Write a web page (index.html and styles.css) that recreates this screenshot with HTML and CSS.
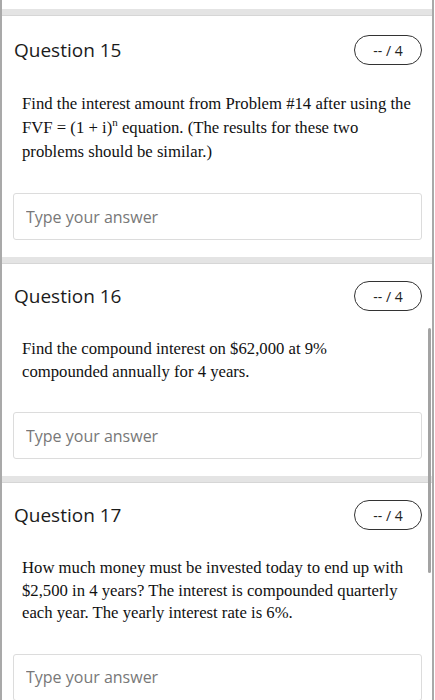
FILE: index.html
```html
<!DOCTYPE html>
<html lang="en">
<head>
    <meta charset="UTF-8">
    <meta name="viewport" content="width=device-width, initial-scale=1.0">
    <title>Quiz</title>
    <link rel="stylesheet" href="styles.css">
</head>
<body>
    <div class="quiz">
        <!-- end of the previous question -->
        <div class="prev-end"></div>

        <div class="question">
            <div class="question-head">
                <h2>Question 15</h2>
                <span class="score">-- / 4</span>
            </div>
            <p class="prompt prompt-formula">Find the interest amount from Problem #14 after using the FVF = (1 + i)<sup>n</sup> equation. (The results for these two problems should be similar.)</p>
            <input class="answer" type="text" placeholder="Type your answer">
        </div>

        <div class="question">
            <div class="question-head">
                <h2>Question 16</h2>
                <span class="score">-- / 4</span>
            </div>
            <p class="prompt">Find the compound interest on $62,000 at 9%<br>compounded annually for 4 years.</p>
            <input class="answer" type="text" placeholder="Type your answer">
        </div>

        <div class="question">
            <div class="question-head">
                <h2>Question 17</h2>
                <span class="score">-- / 4</span>
            </div>
            <p class="prompt">How much money must be invested today to end up with $2,500 in 4 years? The interest is compounded quarterly each year. The yearly interest rate is 6%.</p>
            <input class="answer" type="text" placeholder="Type your answer">
        </div>

        <div class="scroll-thumb"></div>
    </div>
</body>
</html>
```

FILE: styles.css
```css
body {
    margin: 0;
    background-color: white;
    font-family: "Open Sans", Arial, sans-serif;
    color: #1b1b1b;
}

.quiz {
    position: relative;
    width: 430px;
    border-left: 2px solid #a9a9a9;
    border-right: 2px solid #a9a9a9;
    overflow: hidden;
}

.prev-end {
    height: 9px;
}

.question {
    border-top: 6px solid #e4e4e4;
    box-shadow: inset 0 1px 0 #d6d6d6;
    padding: 20px 10px 17px 11px;
}

.question + .question {
    padding-top: 18px;
}

.question-head {
    display: flex;
    align-items: center;
    justify-content: space-between;
    height: 30px;
}

.question-head h2 {
    margin: 0 0 0 1px;
    font-size: 19px;
    font-weight: 400;
    color: #1b1b1b;
}

.score {
    box-sizing: border-box;
    width: 68px;
    height: 30px;
    border: 1px solid #333;
    border-radius: 15px;
    display: flex;
    align-items: center;
    justify-content: center;
    font-size: 14px;
    color: #222;
}

.prompt {
    margin: 27px 2px 29px 9px;
    font-family: "Liberation Serif", "Times New Roman", serif;
    font-size: 16.7px;
    line-height: 22.5px;
    color: #111;
}

.prompt-formula {
    line-height: 24px;
}

.prompt sup {
    font-size: 11px;
    line-height: 0;
}

.answer {
    display: block;
    box-sizing: border-box;
    width: 409px;
    height: 47px;
    margin: 0;
    padding: 0 12px;
    border: 1px solid #dcdcdc;
    border-radius: 3px;
    font-family: "Open Sans", Arial, sans-serif;
    font-size: 16px;
    color: #222;
}

.answer::placeholder {
    color: #787878;
}

.scroll-thumb {
    position: absolute;
    left: 426px;
    top: 328px;
    width: 3px;
    height: 245px;
    border-radius: 2px;
    background-color: #a3a3a3;
}
```
